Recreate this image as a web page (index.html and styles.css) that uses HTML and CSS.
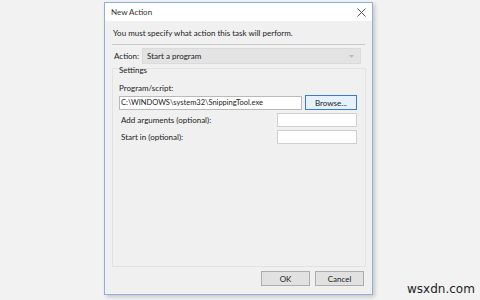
FILE: index.html
```html
<!DOCTYPE html>
<html lang="en">
<head>
    <meta charset="UTF-8">
    <title>New Action</title>
    <link rel="stylesheet" href="styles.css">
</head>
<body>
    <div class="dialog">
        <div class="titlebar">
            <span class="title">New Action</span>
            <svg class="close" width="9" height="9" viewBox="0 0 9 9">
                <path d="M0.5 0.5 L8.5 8.5 M8.5 0.5 L0.5 8.5" stroke="#555" stroke-width="1" fill="none"/>
            </svg>
        </div>
        <div class="body">
            <p class="intro">You must specify what action this task will perform.</p>
            <div class="rule"></div>
            <div class="action-row">
                <span class="label">Action:</span>
                <div class="combo">
                    <span>Start a program</span>
                    <svg width="5" height="3" viewBox="0 0 5 3"><path d="M0 0 L2.5 3 L5 0 Z" fill="#bbb"/></svg>
                </div>
            </div>
            <div class="settings">
                <span class="legend">Settings</span>
                <div class="field-label">Program/script:</div>
                <div class="program-row">
                    <div class="input wide">C:\WINDOWS\system32\SnippingTool.exe</div>
                    <button class="btn browse">Browse...</button>
                </div>
                <div class="opt-row">
                    <span class="label">Add arguments (optional):</span>
                    <div class="input short"></div>
                </div>
                <div class="opt-row">
                    <span class="label">Start in (optional):</span>
                    <div class="input short"></div>
                </div>
            </div>
            <div class="footer">
                <button class="btn">OK</button>
                <button class="btn">Cancel</button>
            </div>
        </div>
    </div>
    <div class="watermark">wsxdn.com</div>
</body>
</html>
```

FILE: styles.css
```css
body {
    margin: 0;
    background: #f2f2f2;
    font-family: Lato, "Open Sans", sans-serif;
    font-size: 8px;
    color: #222;
    height: 300px;
    overflow: hidden;
    position: relative;
}

.dialog {
    width: 267px;
    height: 291px;
    margin: 2px 0 0 104px;
    border: 1px solid #8fb0dc;
    background: #f0f0f0;
    box-shadow: 2px 2px 4px rgba(0,0,0,0.18);
    display: flex;
    flex-direction: column;
}

.titlebar {
    height: 18px;
    flex: none;
    background: #fff;
    display: flex;
    align-items: center;
    justify-content: space-between;
    padding: 0 6px 0 6px;
}

.title {
    color: #333;
}

.body {
    flex: 1;
    display: flex;
    flex-direction: column;
    padding: 0 6px 0 7px;
}

.intro {
    margin: 7px 0 0 1px;
    line-height: 11px;
}

.rule {
    height: 1px;
    background: #c8c8c8;
    margin: 5px 1px 0 0;
}

.action-row {
    display: flex;
    align-items: center;
    margin-top: 3px;
    padding-left: 2px;
}

.combo {
    margin-left: 3px;
    width: 219px;
    height: 16px;
    background: #e3e3e3;
    border: 1px solid #dadada;
    display: flex;
    align-items: center;
    justify-content: space-between;
    padding: 0 6px 0 4px;
    box-sizing: border-box;
}

.settings {
    position: relative;
    border: 1px solid #e2e2e2;
    margin: 4px 0 0 0;
    height: 199px;
    padding: 8px 8px 0 6px;
    box-sizing: border-box;
}

.legend {
    position: absolute;
    top: -4px;
    left: 4px;
    padding: 0 2px;
}

.field-label {
    margin-top: 5px;
    line-height: 12px;
}

.program-row {
    display: flex;
    justify-content: space-between;
    align-items: center;
    margin-top: 1px;
}

.input {
    background: #fff;
    border: 1px solid #b9b9b9;
    height: 14px;
    box-sizing: border-box;
    line-height: 12px;
    padding-left: 1px;
    font-size: 7.5px;
}

.input.wide {
    width: 183px;
}

.input.short {
    width: 80px;
    border-color: #cfcfcf;
}

.btn {
    font-family: inherit;
    font-size: 8px;
    color: #222;
    background: #e1e1e1;
    border: 1px solid #adadad;
    height: 15px;
    width: 49px;
    padding: 0;
}

.btn.browse {
    width: 52px;
    border-color: #3d7bd0;
    background: #e5f1fb;
}

.opt-row {
    display: flex;
    justify-content: space-between;
    align-items: center;
    margin-top: 3px;
    padding-left: 2px;
}

.footer {
    display: flex;
    justify-content: flex-end;
    gap: 5px;
    margin-top: 4px;
    padding-right: 2px;
}

.watermark {
    position: absolute;
    left: 407px;
    top: 282px;
    font-family: "DejaVu Sans", sans-serif;
    font-size: 12px;
    color: #222;
}
```
